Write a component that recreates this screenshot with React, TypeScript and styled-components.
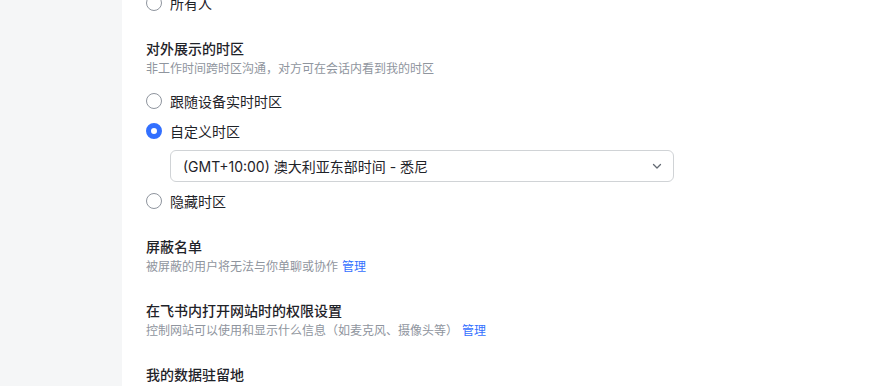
import React from "react";
import styled, { createGlobalStyle } from "styled-components";

const Global = createGlobalStyle`
  html, body { margin: 0; padding: 0; background: #fff; }
  body {
    font-family: Inter, "Noto Sans CJK SC", sans-serif;
    -webkit-font-smoothing: antialiased;
  }
`;

const Page = styled.div`
  display: flex;
  height: 386px;
  overflow: hidden;
`;

const Sidebar = styled.aside`
  width: 122px;
  flex: none;
  background: #f5f6f7;
`;

const Main = styled.main`
  flex: 1;
  padding-left: 24px;
  display: flex;
  flex-direction: column;
  gap: 24px;
  margin-top: -8px;
`;

const Section = styled.section`
  display: flex;
  flex-direction: column;
`;

const Title = styled.div`
  font-size: 14px;
  line-height: 22px;
  font-weight: 500;
  color: #1f2329;
`;

const Desc = styled.div`
  font-size: 12px;
  line-height: 18px;
  color: #8f959e;
`;

const Link = styled.a`
  color: #3370ff;
  margin-left: 4px;
  cursor: pointer;
`;

const RadioGroup = styled.div<{ $top?: number }>`
  display: flex;
  flex-direction: column;
  gap: 8px;
  margin-top: ${(p) => p.$top ?? 0}px;
`;

const RadioRow = styled.label`
  display: flex;
  align-items: center;
  gap: 8px;
  height: 22px;
  font-size: 14px;
  color: #1f2329;
`;

const RadioDot = styled.span<{ $checked?: boolean }>`
  width: 16px;
  height: 16px;
  box-sizing: border-box;
  border-radius: 50%;
  flex: none;
  border: ${(p) => (p.$checked ? "5px solid #3370ff" : "1px solid #8f959e")};
  background: #fff;
`;

const Select = styled.div`
  margin-left: 24px;
  width: 504px;
  height: 32px;
  box-sizing: border-box;
  border: 1px solid #d0d3d6;
  border-radius: 6px;
  display: flex;
  align-items: center;
  justify-content: space-between;
  padding: 0 10px 0 12px;
  font-size: 14px;
  color: #1f2329;
`;

const Chevron = () => (
  <svg width="12" height="12" viewBox="0 0 12 12" fill="none">
    <path d="M2.5 4.5 L6 8 L9.5 4.5" stroke="#646a73" strokeWidth="1.3" strokeLinecap="round" strokeLinejoin="round" />
  </svg>
);

const Radio = ({ label, checked }: { label: string; checked?: boolean }) => (
  <RadioRow>
    <RadioDot $checked={checked} />
    {label}
  </RadioRow>
);

export default function App() {
  return (
    <>
      <Global />
      <Page>
        <Sidebar />
        <Main>
          <RadioGroup>
            <Radio label="所有人" />
          </RadioGroup>
          <Section>
            <Title>对外展示的时区</Title>
            <Desc>非工作时间跨时区沟通，对方可在会话内看到我的时区</Desc>
            <RadioGroup $top={12}>
              <Radio label="跟随设备实时时区" />
              <Radio label="自定义时区" checked />
              <Select>
                <span>(GMT+10:00) 澳大利亚东部时间 - 悉尼</span>
                <Chevron />
              </Select>
              <Radio label="隐藏时区" />
            </RadioGroup>
          </Section>
          <Section>
            <Title>屏蔽名单</Title>
            <Desc>
              被屏蔽的用户将无法与你单聊或协作<Link>管理</Link>
            </Desc>
          </Section>
          <Section>
            <Title>在飞书内打开网站时的权限设置</Title>
            <Desc>
              控制网站可以使用和显示什么信息（如麦克风、摄像头等）<Link>管理</Link>
            </Desc>
          </Section>
          <Section>
            <Title>我的数据驻留地</Title>
          </Section>
        </Main>
      </Page>
    </>
  );
}
